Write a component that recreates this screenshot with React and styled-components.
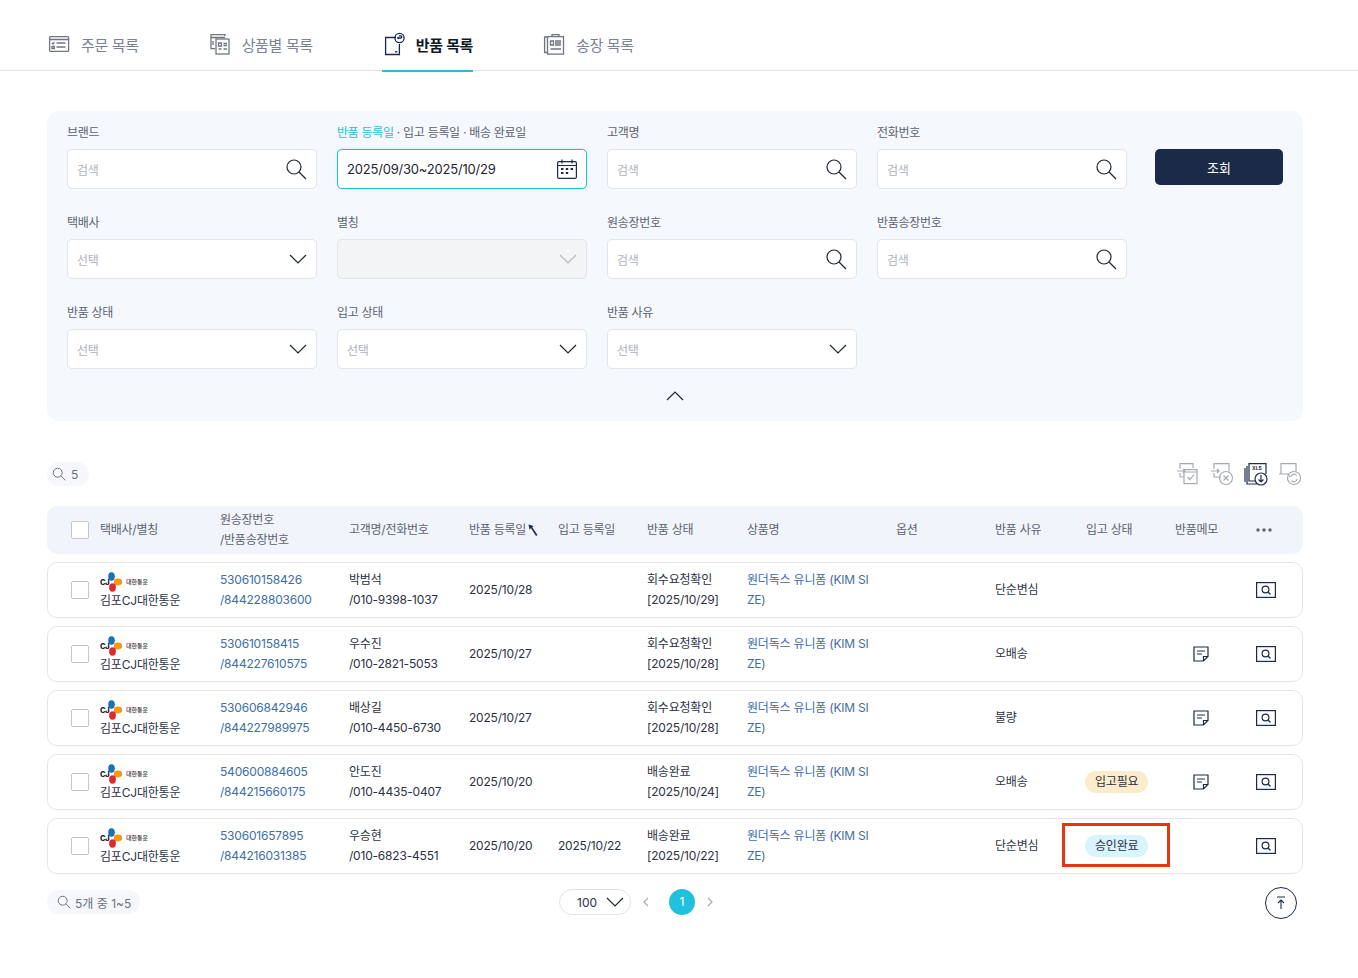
import React from 'react'
import styled, { createGlobalStyle } from 'styled-components'

const GlobalStyle = createGlobalStyle`
    * { box-sizing: border-box; }
    html, body { margin: 0; padding: 0; background: #fff; }
    body {
        font-family: Inter, "Noto Sans CJK KR", "Noto Sans", sans-serif;
        font-size: 12px;
        color: #2b3242;
    }
`
const Page = styled.div`
    width: 1358px;
    min-height: 978px;
`
const TabBar = styled.div`
    display: flex;
    gap: 69px;
    height: 71px;
    padding-left: 47px;
    border-bottom: 1px solid #e3e5e8;
`
const Tab = styled.div`
    display: flex;
    align-items: center;
    gap: 10px;
    height: 72px;
    padding-top: 18px;
    font-size: 15px;
    letter-spacing: -0.35px;
    font-weight: ${({ $active }) => ($active ? 600 : 400)};
    color: ${({ $active }) => ($active ? '#111827' : '#7b8290')};
    border-bottom: 2px solid ${({ $active }) => ($active ? '#2bbcd4' : 'transparent')};
`
const TabIcon = styled.svg`
    width: 24px;
    height: 24px;
    flex: none;
    fill: none;
    stroke: ${({ $active }) => ($active ? '#1c2a4a' : '#6f7682')};
    stroke-width: 1.3;
`
const Content = styled.div`
    padding: 0 55px 0 47px;
`
const FilterPanel = styled.div`
    margin-top: 40px;
    height: 310px;
    padding: 12px 20px 0;
    background: #f5f8fc;
    border-radius: 12px;
`
const FilterGrid = styled.div`
    display: grid;
    grid-template-columns: repeat(4, 250px) 136px;
    column-gap: 20px;
    row-gap: 24px;
`
const Field = styled.div`
    min-width: 0;
`
const Label = styled.div`
    height: 26px;
    padding-top: 1px;
    line-height: 17px;
    font-size: 12px;
    letter-spacing: -0.3px;
    color: #5b6271;
`
const LabelActive = styled.span`
    color: #2bbcd4;
`
const Control = styled.div`
    display: flex;
    align-items: center;
    justify-content: space-between;
    height: 40px;
    padding: 0 9px;
    border-radius: 5px;
    font-size: 13px;
    letter-spacing: -0.2px;
    background: ${({ $disabled }) => ($disabled ? '#f3f4f6' : '#fff')};
    border: 1px solid ${({ $focus }) => ($focus ? '#2bbcd4' : '#e1e4ea')};
    box-shadow: ${({ $focus }) => ($focus ? '0 0 2px rgba(43,188,212,.45)' : 'none')};
    color: #1f2633;
`
const Placeholder = styled.span`
    font-size: 12px;
    letter-spacing: -0.3px;
    color: #aeb3bc;
`
const SearchButton = styled.button`
    justify-self: end;
    width: 128px;
    height: 36px;
    margin-top: 26px;
    border: 0;
    border-radius: 5px;
    background: #1c2a4a;
    color: #fff;
    font: inherit;
    font-size: 13px;
`
const Collapse = styled.div`
    display: flex;
    justify-content: center;
    margin-top: 22px;
`
const Toolbar = styled.div`
    display: flex;
    align-items: center;
    justify-content: space-between;
    margin-top: 41px;
    height: 24px;
`
const CountPill = styled.div`
    display: flex;
    align-items: center;
    gap: ${({ $wide }) => ($wide ? '4px' : '5px')};
    height: 24px;
    padding: 0 ${({ $wide }) => ($wide ? '9px' : '11px')} 0 ${({ $wide }) => ($wide ? '10px' : '5px')};
    border-radius: 12px;
    background: #f5f7fa;
    color: #6b7280;
    font-size: 12px;
`
const ToolIcons = styled.div`
    display: flex;
    gap: 10px;
    margin-right: 1px;
`
const ToolIcon = styled.svg`
    width: 24px;
    height: 24px;
    fill: none;
    stroke: ${({ $dark }) => ($dark ? '#1c2a4a' : '#a6abb3')};
    stroke-width: 1.2;
`
const COLUMNS = '29px 120px 129px 120px 89px 89px 100px 149px 99px 91px 89px 81px 1fr'
const HeadRow = styled.div`
    display: grid;
    grid-template-columns: ${COLUMNS};
    align-items: center;
    height: 48px;
    margin-top: 20px;
    padding-left: 24px;
    background: #f1f5fb;
    border-radius: 10px;
    font-size: 12px;
    line-height: 20px;
    letter-spacing: -0.25px;
    color: #5b6271;
`
const Rows = styled.div`
    display: flex;
    flex-direction: column;
    gap: 8px;
    margin-top: 8px;
`
const Row = styled.div`
    display: grid;
    grid-template-columns: ${COLUMNS};
    align-items: center;
    height: 56px;
    padding-left: 23px;
    border: 1px solid #e3e5e8;
    border-radius: 10px;
    font-size: 12px;
    line-height: 20px;
    letter-spacing: -0.2px;
    color: #2b3242;
`
const Check = styled.span`
    display: block;
    width: 18px;
    height: 18px;
    border: 1px solid #c2c6cd;
    border-radius: 2px;
    background: #fff;
`
const Carrier = styled.div`
    display: flex;
    flex-direction: column;
    line-height: 17px;
`
const LogoWrap = styled.div`
    display: flex;
    align-items: center;
    height: 20px;
`
const LogoName = styled.span`
    margin-left: 2px;
    font-size: 6px;
    letter-spacing: 0;
    font-weight: 500;
    line-height: 8px;
    color: #333;
`
const Link = styled.div`
    color: #3b6ea8;
`
const HeadWithIcon = styled.div`
    display: flex;
    align-items: center;
    gap: 2px;
`
const Badge = styled.span`
    display: inline-block;
    height: 22px;
    padding: 0 10px;
    border-radius: 11px;
    line-height: 22px;
    background: ${({ $tone }) => ($tone === 'done' ? '#d8f4fc' : '#fdeccb')};
    color: #2b3242;
`
const BadgeCell = styled.div`
    position: relative;
    margin-left: -1px;
`
const Highlight = styled.span`
    position: absolute;
    left: -23px;
    top: -12px;
    width: 108px;
    height: 44px;
    border: 3px solid #e8340f;
    pointer-events: none;
`
const MemoCell = styled.div`
    display: flex;
    padding-left: 18px;
`
const ViewCell = styled.div`
    display: flex;
    padding-left: -3px;
`
const DarkIcon = styled.svg`
    fill: none;
    stroke: #1c2a4a;
    stroke-width: 1.2;
    display: block;
`
const Footer = styled.div`
    display: grid;
    grid-template-columns: 512px auto 1fr;
    align-items: center;
    height: 32px;
    margin-top: 13px;
`
const FooterPill = styled(CountPill)`
    justify-self: start;
    margin-top: -2px;
`
const Pager = styled.div`
    display: flex;
    align-items: center;
    margin-top: -2px;
`
const SizeSelect = styled.div`
    display: flex;
    align-items: center;
    justify-content: space-between;
    width: 72px;
    height: 26px;
    padding: 0 6px 0 17px;
    border: 1px solid #e1e4ea;
    border-radius: 13px;
    font-size: 12px;
    color: #2b3242;
`
const PageNum = styled.div`
    width: 26px;
    height: 26px;
    margin: 0 10px;
    border-radius: 50%;
    background: #1fc1de;
    color: #fff;
    font-size: 12px;
    line-height: 25px;
    text-align: center;
`
const ScrollTop = styled.div`
    justify-self: end;
    display: flex;
    align-items: center;
    justify-content: center;
    width: 32px;
    height: 32px;
    margin-right: 6px;
    border: 1px solid #1c2a4a;
    border-radius: 50%;
`

const SearchGlyph = ({ size = 22, color = '#1f2633' }) => (
    <svg width={size} height={size} viewBox="0 0 22 22" fill="none" stroke={color} strokeWidth="1.2">
        <circle cx="9" cy="9" r="7" />
        <path d="M14 14l7 7" />
    </svg>
)
const Chevron = ({ up, color = '#1f2633', width = 18 }) => (
    <svg width={width} height="10" viewBox="0 0 18 10" fill="none" stroke={color} strokeWidth="1.2">
        <path d={up ? 'M1 9l8-8 8 8' : 'M1 1l8 8 8-8'} />
    </svg>
)
const Calendar = () => (
    <DarkIcon width="20" height="20" viewBox="0 0 20 20">
        <rect x="0.6" y="2.6" width="18.8" height="16.8" rx="1.5" />
        <path d="M1 6.5h18M5 0.5v4M15 0.5v4" />
        <path stroke="none" fill="#1c2a4a" d="M4 9h2.4v2H4zM8.8 9h2.4v2H8.8zM13.6 9h2.4v2h-2.4zM4 13h2.4v2H4zM8.8 13h2.4v2H8.8z" />
    </DarkIcon>
)
const Field2 = ({ label, children }) => (
    <Field>
        <Label>{label}</Label>
        {children}
    </Field>
)
const SearchField = ({ label }) => (
    <Field2 label={label}>
        <Control>
            <Placeholder>검색</Placeholder>
            <SearchGlyph />
        </Control>
    </Field2>
)
const SelectField = ({ label, disabled }) => (
    <Field2 label={label}>
        <Control $disabled={disabled}>
            <Placeholder>{disabled ? '' : '선택'}</Placeholder>
            <Chevron color={disabled ? '#b5bac2' : '#1f2633'} />
        </Control>
    </Field2>
)
const CjLogo = () => (
    <LogoWrap>
        <svg width="49" height="20" viewBox="0 0 30 20">
            <text x="0" y="13" fontFamily="Inter, sans-serif" fontSize="7" fontWeight="800" fill="#222" letterSpacing="-0.3">CJ</text>
            <ellipse cx="12.5" cy="5" rx="3.5" ry="4.8" fill="#1b6fb7" />
            <ellipse cx="19" cy="10" rx="4.4" ry="3.6" fill="#f29a12" />
            <ellipse cx="13" cy="15" rx="3.6" ry="4.5" fill="#dc2a35" />
        </svg>
    </LogoWrap>
)
const MemoIcon = () => (
    <DarkIcon width="16" height="16" viewBox="0 0 16 16">
        <path d="M1 1h14v9.5L10.5 15H1z" />
        <path d="M15 10.5h-4.5V15M4 5h8M4 8h5" />
    </DarkIcon>
)
const ViewIcon = () => (
    <DarkIcon width="20" height="16" viewBox="0 0 20 16">
        <rect x="0.6" y="0.6" width="18.8" height="14.8" />
        <circle cx="9.5" cy="7.5" r="3.4" />
        <path d="M12 10l2.5 2.5" />
    </DarkIcon>
)

const ROWS = [
    { inv: '530610158426', ret: '/844228803600', name: '박범석', tel: '/010-9398-1037', reg: '2025/10/28', wh: '', st: '회수요청확인', stDate: '[2025/10/29]', reason: '단순변심' },
    { inv: '530610158415', ret: '/844227610575', name: '우수진', tel: '/010-2821-5053', reg: '2025/10/27', wh: '', st: '회수요청확인', stDate: '[2025/10/28]', reason: '오배송', memo: true },
    { inv: '530606842946', ret: '/844227989975', name: '배상길', tel: '/010-4450-6730', reg: '2025/10/27', wh: '', st: '회수요청확인', stDate: '[2025/10/28]', reason: '불량', memo: true },
    { inv: '540600884605', ret: '/844215660175', name: '안도진', tel: '/010-4435-0407', reg: '2025/10/20', wh: '', st: '배송완료', stDate: '[2025/10/24]', reason: '오배송', memo: true, badge: '입고필요', tone: 'need' },
    { inv: '530601657895', ret: '/844216031385', name: '우승현', tel: '/010-6823-4551', reg: '2025/10/20', wh: '2025/10/22', st: '배송완료', stDate: '[2025/10/22]', reason: '단순변심', badge: '승인완료', tone: 'done', mark: true },
]

export default function App() {
    return (
        <Page>
            <GlobalStyle />
            <TabBar>
                <Tab>
                    <TabIcon viewBox="0 0 24 24">
                        <rect x="2.6" y="4.6" width="19" height="14.8" rx="1" />
                        <path d="M2.6 7.5h19M9.5 11h9M9.5 15h9M5 11l1 1 1.5-1.8M5 14.5h2.4v2H5z" />
                    </TabIcon>
                    주문 목록
                </Tab>
                <Tab>
                    <TabIcon viewBox="0 0 24 24">
                        <path d="M17 4V2.6H3v14h4M3 5.5h14" />
                        <rect x="8" y="7" width="13" height="15" />
                        <path d="M10.5 11h3v3h-3zM15.5 11.5H19M15.5 13.5H19M10.5 17h3M15.5 17H19M5 9v4" />
                    </TabIcon>
                    상품별 목록
                </Tab>
                <Tab $active>
                    <TabIcon $active viewBox="0 0 24 24">
                        <path d="M14 5.5H3.6v17h13.8V12" />
                        <path d="M13 19.8h2.4" />
                        <circle cx="17.5" cy="6" r="4.6" />
                        <path d="M15.5 6h3.5a1.2 1.2 0 0 0 0-2.2h-2M15.5 6l1.2-1.1M15.5 6l1.2 1.1" />
                    </TabIcon>
                    반품 목록
                </Tab>
                <Tab>
                    <TabIcon viewBox="0 0 24 24">
                        <path d="M5 5H2.6v15.5H6" />
                        <rect x="5.5" y="4.6" width="16" height="17.5" />
                        <path d="M10 4.6V2.6h7v2M8.5 9h3v4h-3zM13 9h6M13 11h6M13 13h6M8.5 17h10.500" />
                    </TabIcon>
                    송장 목록
                </Tab>
            </TabBar>
            <Content>
                <FilterPanel>
                    <FilterGrid>
                        <SearchField label="브랜드" />
                        <Field2 label={<><LabelActive>반품 등록일</LabelActive> · 입고 등록일 · 배송 완료일</>}>
                            <Control $focus>
                                2025/09/30~2025/10/29
                                <Calendar />
                            </Control>
                        </Field2>
                        <SearchField label="고객명" />
                        <SearchField label="전화번호" />
                        <SearchButton>조회</SearchButton>
                        <SelectField label="택배사" />
                        <SelectField label="별칭" disabled />
                        <SearchField label="원송장번호" />
                        <SearchField label="반품송장번호" />
                        <span />
                        <SelectField label="반품 상태" />
                        <SelectField label="입고 상태" />
                        <SelectField label="반품 사유" />
                    </FilterGrid>
                    <Collapse>
                        <Chevron up />
                    </Collapse>
                </FilterPanel>
                <Toolbar>
                    <CountPill>
                        <SearchGlyph size={14} color="#4b5260" />
                        5
                    </CountPill>
                    <ToolIcons>
                        <ToolIcon viewBox="0 0 24 24">
                            <path d="M4 7V1.600h13V6M1 9h8M7 7l2 2-2 2M4 11v4h4" />
                            <rect x="8" y="7.6" width="13" height="14" />
                            <path d="M11.500 15l2.500 2.500 4-5M8 10h13" />
                        </ToolIcon>
                        <ToolIcon viewBox="0 0 24 24">
                            <path d="M4 7V1.600h15V9M1 9h8M7 7l2 2-2 2M4 11v4h7" />
                            <circle cx="16" cy="16" r="6.500" />
                            <path d="M13.500 13.500l5 5M18.500 13.500l-5 5" />
                        </ToolIcon>
                        <ToolIcon $dark viewBox="0 0 24 24">
                            <path d="M3 4v18h10" />
                            <path d="M1 6v14" />
                            <path d="M12 19H5V1.600h17V12" />
                            <circle cx="17" cy="17" r="6" />
                            <path d="M17 13v7M14.500 17.500L17 20l2.500-2.500" />
                            <text x="8" y="8" fontSize="5" fontWeight="700" fill="#1c2a4a" stroke="none" fontFamily="Inter, sans-serif">XLS</text>
                        </ToolIcon>
                        <ToolIcon viewBox="0 0 24 24">
                            <path d="M3 12V1.600h15V9M1 12h9l2 3" />
                            <circle cx="16" cy="16" r="6.500" />
                            <path d="M12.800 15a3.400 3.400 0 0 1 6-1.500M19.200 17a3.400 3.400 0 0 1-6 1.500" />
                        </ToolIcon>
                    </ToolIcons>
                </Toolbar>
                <HeadRow>
                    <Check />
                    <div>택배사/별칭</div>
                    <div>원송장번호<br />/반품송장번호</div>
                    <div>고객명/전화번호</div>
                    <HeadWithIcon>
                        반품 등록일
                        <svg width="10" height="12" viewBox="0 0 10 12">
                            <path fill="#1c2a4a" d="M0.500 0.500L5.500 2 4.200 3.200 9.500 11 8 12 3 4.300 1.500 5.500z" />
                        </svg>
                    </HeadWithIcon>
                    <div>입고 등록일</div>
                    <div>반품 상태</div>
                    <div>상품명</div>
                    <div>옵션</div>
                    <div>반품 사유</div>
                    <div>입고 상태</div>
                    <div>반품메모</div>
                    <svg width="16" height="4" viewBox="0 0 16 4" fill="#5b6271">
                        <circle cx="2" cy="2" r="1.700" />
                        <circle cx="8" cy="2" r="1.700" />
                        <circle cx="14" cy="2" r="1.700" />
                    </svg>
                </HeadRow>
                <Rows>
                    {ROWS.map((r) => (
                        <Row key={r.inv}>
                            <Check />
                            <Carrier>
                                <CjLogoRow />
                                김포CJ대한통운
                            </Carrier>
                            <Link>{r.inv}<br />{r.ret}</Link>
                            <div>{r.name}<br />{r.tel}</div>
                            <div>{r.reg}</div>
                            <div>{r.wh}</div>
                            <div>{r.st}<br />{r.stDate}</div>
                            <Link>원더독스 유니폼 (KIM SI<br />ZE)</Link>
                            <div />
                            <div>{r.reason}</div>
                            <BadgeCell>
                                {r.badge && <Badge $tone={r.tone}>{r.badge}</Badge>}
                                {r.mark && <Highlight />}
                            </BadgeCell>
                            <MemoCell>{r.memo && <MemoIcon />}</MemoCell>
                            <ViewCell><ViewIcon /></ViewCell>
                        </Row>
                    ))}
                </Rows>
                <Footer>
                    <FooterPill $wide>
                        <SearchGlyph size={14} color="#4b5260" />
                        5개 중 1~5
                    </FooterPill>
                    <Pager>
                        <SizeSelect>
                            100
                            <Chevron />
                        </SizeSelect>
                        <svg width="28" height="10" viewBox="0 0 28 10" fill="none" stroke="#a6abb3" strokeWidth="1.200">
                            <path d="M17 1l-4 4 4 4" />
                        </svg>
                        <PageNum>1</PageNum>
                        <svg width="10" height="10" viewBox="0 0 10 10" fill="none" stroke="#a6abb3" strokeWidth="1.200">
                            <path d="M3 1l4 4-4 4" />
                        </svg>
                    </Pager>
                    <ScrollTop>
                        <svg width="12" height="14" viewBox="0 0 12 14" fill="none" stroke="#1c2a4a" strokeWidth="1.100">
                            <path d="M2 1h8M6 13V4M3 7l3-3 3 3" />
                        </svg>
                    </ScrollTop>
                </Footer>
            </Content>
        </Page>
    )
}

function CjLogoRow() {
    return (
        <LogoWrap>
            <CjMark />
            <LogoName>대한통운</LogoName>
        </LogoWrap>
    )
}

function CjMark() {
    return (
        <svg width="24" height="20" viewBox="0 0 24 20">
            <text x="0" y="13" fontFamily="Inter, sans-serif" fontSize="7.500" fontWeight="800" fill="#222" letterSpacing="-0.3">CJ</text>
            <ellipse cx="11.500" cy="4.500" rx="3.300" ry="4.300" fill="#1b6fb7" />
            <ellipse cx="18" cy="10" rx="4.200" ry="3.400" fill="#f29a12" />
            <ellipse cx="12.500" cy="15.500" rx="3.400" ry="4.200" fill="#dc2a35" />
        </svg>
    )
}
